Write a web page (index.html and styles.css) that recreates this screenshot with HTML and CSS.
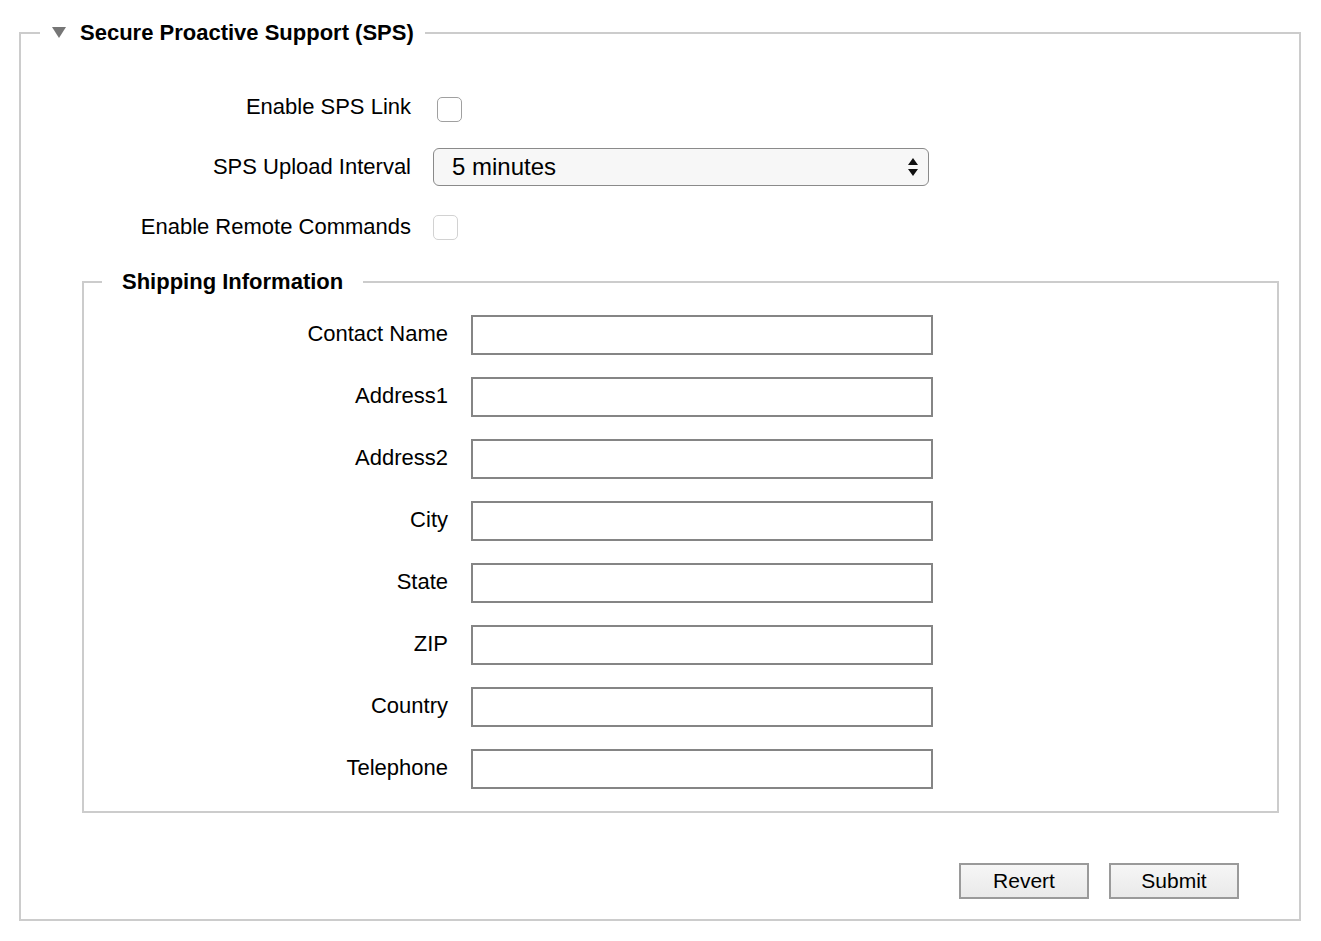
FILE: index.html
```html
<!DOCTYPE html>
<html>
<head>
<meta charset="utf-8">
<link rel="stylesheet" href="styles.css">
</head>
<body>
<fieldset class="panel">
  <legend class="panel-legend"><svg class="caret" width="14" height="11" viewBox="0 0 14 11"><path d="M0 0 H14 L7 11 Z" fill="#767676"/></svg><span class="panel-title">Secure Proactive Support (SPS)</span></legend>
  <div class="form-grid top-grid">
    <label class="lbl">Enable SPS Link</label>
    <div class="ctl"><input type="checkbox" class="check check-first"></div>
    <label class="lbl">SPS Upload Interval</label>
    <div class="ctl">
      <div class="select">
        <span class="select-value">5 minutes</span>
        <svg class="select-arrows" width="10" height="18" viewBox="0 0 10 18"><path d="M5 0 L10 7 H0 Z M0 11 H10 L5 18 Z" fill="#111"/></svg>
      </div>
    </div>
    <label class="lbl">Enable Remote Commands</label>
    <div class="ctl"><input type="checkbox" class="check check-light"></div>
  </div>

  <fieldset class="sub">
    <legend class="sub-legend">Shipping Information</legend>
    <div class="form-grid ship-grid">
      <label class="lbl">Contact Name</label><div class="ctl"><input type="text" class="txt"></div>
      <label class="lbl">Address1</label><div class="ctl"><input type="text" class="txt"></div>
      <label class="lbl">Address2</label><div class="ctl"><input type="text" class="txt"></div>
      <label class="lbl">City</label><div class="ctl"><input type="text" class="txt"></div>
      <label class="lbl">State</label><div class="ctl"><input type="text" class="txt"></div>
      <label class="lbl">ZIP</label><div class="ctl"><input type="text" class="txt"></div>
      <label class="lbl">Country</label><div class="ctl"><input type="text" class="txt"></div>
      <label class="lbl">Telephone</label><div class="ctl"><input type="text" class="txt"></div>
    </div>
  </fieldset>

  <div class="actions">
    <button class="btn">Revert</button>
    <button class="btn">Submit</button>
  </div>
</fieldset>
</body>
</html>
```

FILE: styles.css
```css
html, body {
  margin: 0;
  padding: 0;
  background: #ffffff;
}
body {
  padding-top: 20px;
  font-family: "Liberation Sans", Arial, Helvetica, sans-serif;
  font-size: 22px;
  color: #000;
}
.panel {
  margin: 0 20px 0 19px;
  padding: 0;
  border: 2px solid #cccccc;
  min-inline-size: 0;
}
.panel-legend {
  margin-left: 19px;
  padding: 0 11px 0 12px;
  line-height: 26px;
  height: 26px;
  display: flex;
  align-items: center;
}
.caret {
  display: block;
  margin-right: 14px;
  margin-top: -1px;
}
.panel-title {
  font-weight: bold;
  font-size: 22px;
}
.form-grid {
  display: grid;
  align-items: center;
}
.top-grid {
  grid-template-columns: 390px auto;
  grid-auto-rows: 40px;
  column-gap: 22px;
  row-gap: 20px;
  padding-top: 41px;
}
.lbl {
  text-align: right;
  white-space: nowrap;
  line-height: 26px;
}
.ship-grid .lbl {
  padding-bottom: 3px;
}
.ctl {
  display: flex;
  align-items: center;
}
.check {
  appearance: none;
  -webkit-appearance: none;
  margin: 0;
  width: 25px;
  height: 25px;
  box-sizing: border-box;
  border: 1.5px solid #a0a0a0;
  border-radius: 5px;
  background: #fff;
}
.check-first {
  margin-left: 4px;
  margin-top: 4px;
}
.check-light {
  border-color: #d2d2d2;
}
.select {
  box-sizing: border-box;
  width: 496px;
  height: 38px;
  border: 1.5px solid #8a8a8a;
  border-radius: 6px;
  background: #f7f7f7;
  display: flex;
  align-items: center;
  justify-content: space-between;
  padding: 0 10px 0 18px;
}
.select-value {
  font-size: 24px;
}
.select-arrows {
  display: block;
}
.sub {
  margin: 22px 20px 0 61px;
  padding: 0;
  border: 2px solid #cccccc;
  min-inline-size: 0;
}
.sub-legend {
  margin-left: 18px;
  padding: 0 20px;
  font-weight: bold;
  line-height: 26px;
  height: 26px;
}
.ship-grid {
  grid-template-columns: 364px auto;
  grid-auto-rows: 40px;
  column-gap: 23px;
  row-gap: 22px;
  padding: 20px 0 22px;
}
.txt {
  box-sizing: border-box;
  width: 462px;
  height: 40px;
  margin: 0;
  border: 2px solid #858585;
  border-radius: 0;
  background: #fff;
  font-family: inherit;
  font-size: 20px;
  padding: 0 6px;
  outline: none;
}
.actions {
  display: flex;
  justify-content: flex-end;
  gap: 20px;
  margin-top: 50px;
  padding: 0 60px 20px 0;
}
.btn {
  box-sizing: border-box;
  width: 130px;
  height: 36px;
  margin: 0;
  padding: 0;
  border: 2px solid #9a9a9a;
  border-radius: 0;
  background: linear-gradient(#f6f6f6, #e9e9e9);
  font-family: inherit;
  font-size: 21px;
  color: #000;
}
```
